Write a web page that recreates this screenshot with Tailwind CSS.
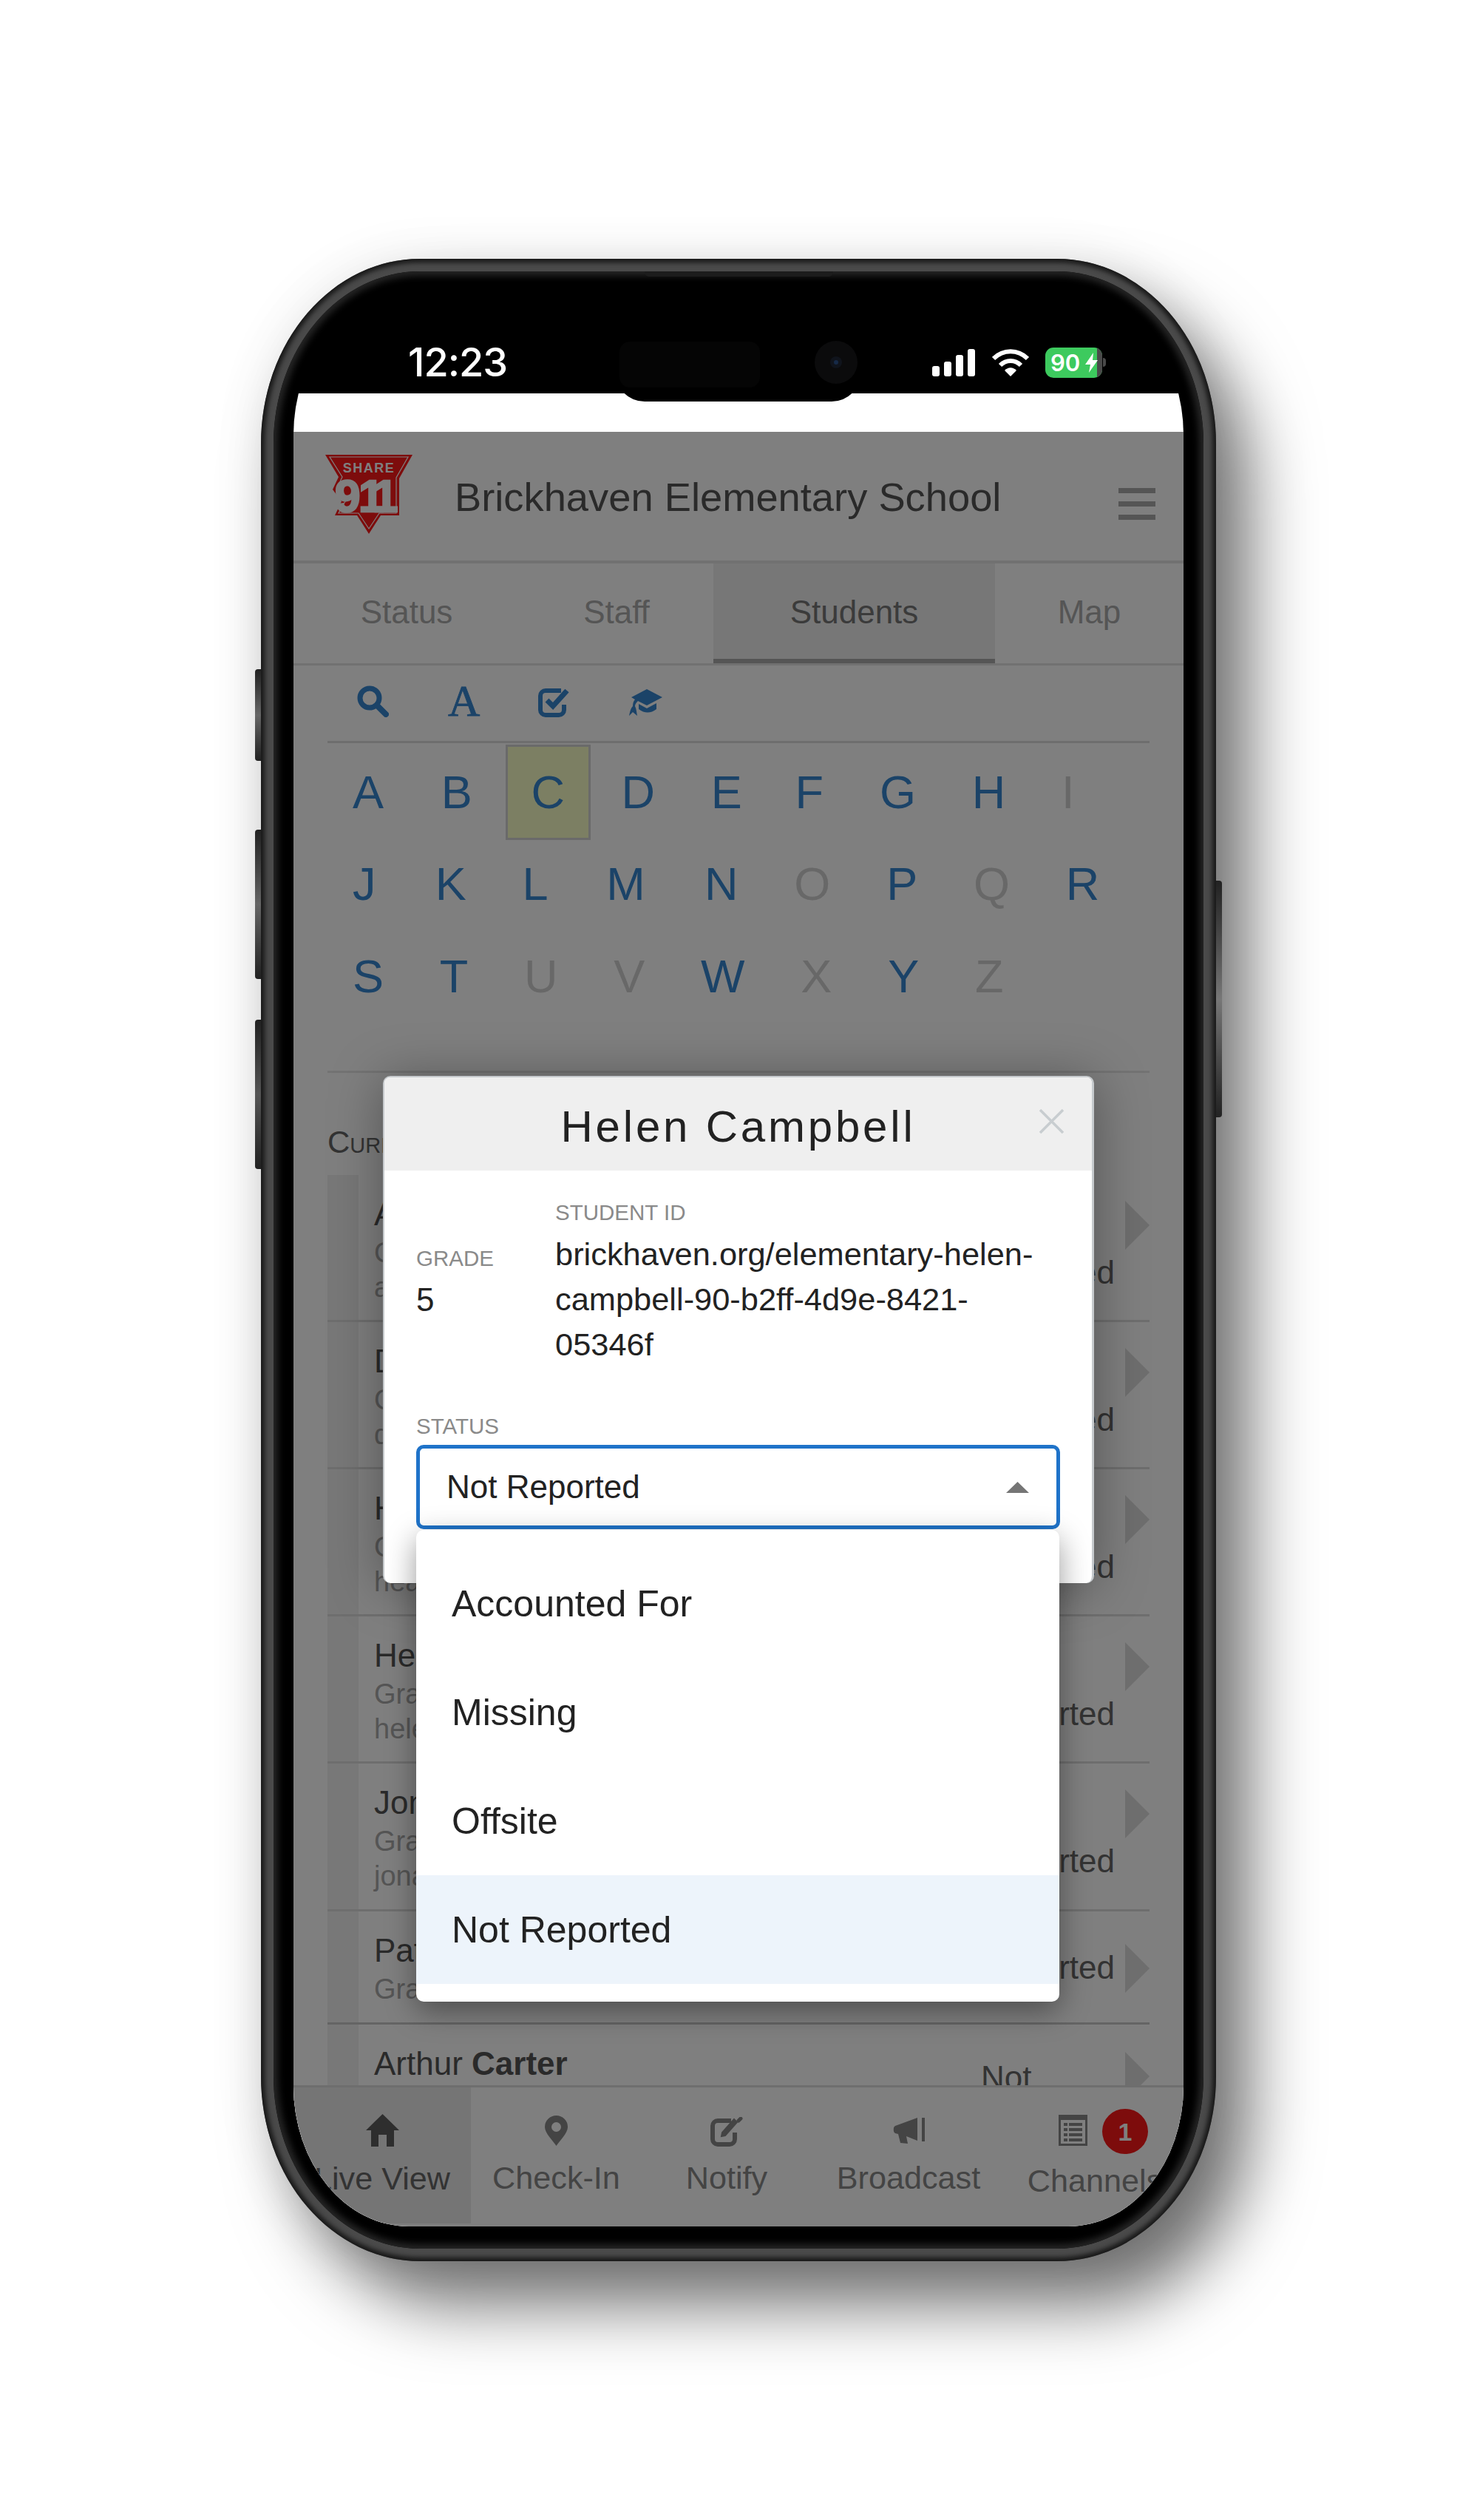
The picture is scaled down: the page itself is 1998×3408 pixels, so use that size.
<!DOCTYPE html>
<html lang="en">
<head>
    <meta charset="UTF-8">
    <meta name="viewport" content="width=device-width, initial-scale=1.0">
    <title>Brickhaven Elementary School</title>
    <script src="https://cdn.jsdelivr.net/npm/@tailwindcss/browser@4"></script>
</head>
<body class="bg-white">
<div class="w-[1998px] h-[3408px] overflow-hidden pt-[350px] pl-[353px] [font-family:'Liberation_Sans',Arial,sans-serif]">

    <!-- Phone frame -->
    <div class="relative w-[1292px] h-[2708px] p-[17px] rounded-[215px/250px] bg-[#4a4a4a] shadow-[inset_0_0_6px_5px_#181818,45px_60px_90px_rgba(0,0,0,0.55),0_0_70px_rgba(0,0,0,0.08)]">

        <!-- Side buttons -->
        <div class="absolute left-[-8px] top-[555px] w-[8px] h-[124px] rounded-l-[4px] bg-gradient-to-b from-[#222] via-[#666] to-[#222]"></div>
        <div class="absolute left-[-8px] top-[772px] w-[8px] h-[202px] rounded-l-[4px] bg-gradient-to-b from-[#222] via-[#666] to-[#222]"></div>
        <div class="absolute left-[-8px] top-[1029px] w-[8px] h-[202px] rounded-l-[4px] bg-gradient-to-b from-[#222] via-[#555] to-[#222]"></div>
        <div class="absolute right-[-8px] top-[841px] w-[8px] h-[320px] rounded-r-[4px] bg-gradient-to-b from-[#222] via-[#777] to-[#222]"></div>

        <!-- Bezel -->
        <div class="relative h-[2674px] px-[27px] pt-[31px] rounded-[198px/233px] bg-black shadow-[inset_0_0_10px_6px_#262626]">
            <div class="absolute left-[502px] top-0 w-[255px] h-[7px] rounded-b-[6px] bg-[#1c1c1c]"></div>

            <!-- Screen -->
            <div class="relative h-[2613px] overflow-hidden rounded-[156px/190px] bg-black">

                <!-- Status bar -->
                <div class="flex items-center h-[134px] pt-[50px] pl-[155px] pr-[105px] text-white">
                    <span class="text-[54px] font-medium leading-none [font-family:Inter,sans-serif] tracking-[-1px]">12:23</span>
                    <svg class="ml-auto" width="58" height="37" viewBox="0 0 58 37" fill="#fff">
                        <rect x="0" y="23" width="10" height="14" rx="3"/>
                        <rect x="16" y="17" width="10" height="20" rx="3"/>
                        <rect x="32" y="8" width="10" height="29" rx="3"/>
                        <rect x="48" y="0" width="10" height="37" rx="3"/>
                    </svg>
                    <svg class="ml-[23px]" width="50" height="37" viewBox="0 0 50 37" fill="none" stroke="#fff" stroke-width="6">
                        <path d="M2 13 C15 0 35 0 48 13"/>
                        <path d="M11 22 C19 14 31 14 39 22"/>
                        <path d="M17 29 L25 37 L33 29 C28 24 22 24 17 29 Z" fill="#fff" stroke="none"/>
                    </svg>
                    <div class="ml-[22px] flex items-center">
                        <div class="relative flex items-center w-[77px] h-[41px] pl-[7px] rounded-[11px] overflow-hidden bg-[#3dca5e] text-[31px] font-bold leading-none">
                            <div class="absolute right-0 inset-y-0 w-[7px] bg-[#4a4a4a]"></div>
                            <span class="relative [font-family:Inter,sans-serif] font-semibold">90</span>
                            <svg class="absolute left-[54px] top-[7px]" width="17" height="27" viewBox="0 0 17 27" fill="#fff"><path d="M11 0 L0 16 L7 16 L5 27 L17 10 L10 10 Z"/></svg>
                        </div>
                        <div class="ml-[1px] w-[4px] h-[12px] rounded-r-[4px] bg-[#4a4a4a]"></div>
                    </div>
                </div>

                <!-- Dynamic island -->
                <div class="absolute left-[435px] top-[48px] w-[333px] h-[97px] rounded-[40px] bg-black">
                    <div class="absolute left-[6px] top-[16px] w-[190px] h-[62px] rounded-[14px] bg-[#050505]"></div>
                    <div class="absolute left-[270px] top-[15px] w-[58px] h-[58px] rounded-full bg-[#0b0b0c]">
                        <div class="absolute left-[21px] top-[21px] w-[16px] h-[16px] rounded-full bg-[#10141c]">
                            <div class="absolute left-[5px] top-[5px] w-[6px] h-[6px] rounded-full bg-[#162a48]"></div>
                        </div>
                    </div>
                </div>

                <div class="h-[52px] bg-white"></div>

                <!-- App -->
                <div class="relative flex flex-col h-[2427px] overflow-hidden bg-white text-[44px] leading-[44px] text-[#666]">

                    <header class="flex items-start h-[178px] border-b-[4px] border-[#e2e2e2] pl-[43px]">
                        <svg class="mt-[31px] shrink-0" width="118" height="108" viewBox="0 0 118 108">
                            <path d="M0 0 H118 L100 32 V82 H75 L59 107 L43 82 H13 L22 63 L10 47 L18 30 Z" fill="#fa1818"/>
                            <path d="M6 3 H112 L96 31 V79 H73 L59 100 L45 79 H18 L27 63 L15 47 L23 30 Z" fill="none" stroke="#fff" stroke-width="1.2"/>
                            <text x="59" y="24" text-anchor="middle" font-size="18" font-weight="700" letter-spacing="1.5" fill="#fff">SHARE</text>
                            <text x="13 45 64" y="77" font-size="62" font-weight="700" stroke="#fff" stroke-width="2.5" fill="#fff">911</text>
                        </svg>
                        <h1 class="ml-[57px] mt-[62px] text-[54.3px] leading-[54px] whitespace-nowrap text-[#555]">Brickhaven Elementary School</h1>
                        <div class="ml-auto mr-[38px] mt-[76px] flex flex-col gap-[11px]">
                            <div class="w-[50px] h-[7px] bg-[#aaa]"></div>
                            <div class="w-[50px] h-[7px] bg-[#aaa]"></div>
                            <div class="w-[50px] h-[7px] bg-[#aaa]"></div>
                        </div>
                    </header>

                    <nav class="flex h-[138px] shrink-0 border-b-[3px] border-[#e2e2e2] text-[#aaa] text-center">
                        <div class="w-[306px] pt-[44px]">Status</div>
                        <div class="w-[262px] pt-[44px]">Staff</div>
                        <div class="w-[381px] pt-[44px] bg-[#eeeeee] border-b-[6px] border-[#aaa] text-[#777]">Students</div>
                        <div class="w-[255px] pt-[44px]">Map</div>
                    </nav>

                    <main class="flex-1 overflow-hidden px-[46px] min-h-0">
                        <div class="flex items-start h-[105px] border-b-[3px] border-[#dcdcdc] pt-[27px] pl-[40px] text-[#3686d0]">
                            <svg width="43" height="43" viewBox="0 0 43 43" fill="none" stroke="#3686d0">
                                <circle cx="17" cy="17" r="13" stroke-width="7"/>
                                <path d="M27 27 L39 39" stroke-width="8" stroke-linecap="round"/>
                            </svg>
                            <span class="ml-[80px] -mt-[9px] text-[60px] leading-[60px] [font-family:'Liberation_Serif',serif] [-webkit-text-stroke:0.8px_#3686d0]">A</span>
                            <svg class="ml-[79px] mt-[3px]" width="44" height="40" viewBox="0 0 44 40" fill="none" stroke="#3686d0" stroke-width="6">
                                <path d="M31 4 H10 a7 7 0 0 0 -7 7 V30 a7 7 0 0 0 7 7 H28 a7 7 0 0 0 7 -7 V23"/>
                                <path d="M12 17 L20 25 L39 4" stroke-width="7"/>
                            </svg>
                            <svg class="ml-[78px] mt-[5px]" width="46" height="36" viewBox="0 0 46 36" fill="#3686d0">
                                <path d="M25 0 L46 11 L25 22 L13 16 C11 18 9 20 9 23 C11 27 11 31 12 36 L6 31 L1 36 C2 31 3 26 6 23 C6 19 7 16 9 14 L4 11 Z"/>
                                <path d="M14 20 L25 26 L38 19 V27 C30 33 22 33 14 27 Z"/>
                            </svg>
                        </div>

                        <!-- Alphabet -->
                        <div class="flex flex-wrap -ml-[4px] mt-[4px] text-[63px] leading-none text-[#3686d0]">
                            <a class="flex items-center h-[124.5px] ml-[4.5px] mr-[6.5px] px-[33.4px]">A</a>
                            <a class="flex items-center h-[124.5px] mx-[4.5px] px-[33.4px]">B</a>
                            <a class="flex items-center h-[129px] -my-[2.25px] ml-[7px] mr-[4px] px-[31.75px] border-[3px] border-[#d4d4d4] bg-[#f8ffc6]">C</a>
                            <a class="flex items-center h-[124.5px] mx-[4.5px] px-[33.4px]">D</a>
                            <a class="flex items-center h-[124.5px] ml-[4.5px] mr-[0.5px] px-[33.4px]">E</a>
                            <a class="flex items-center h-[124.5px] mx-[4.5px] px-[33.4px]">F</a>
                            <a class="flex items-center h-[124.5px] mx-[4.5px] px-[33.4px]">G</a>
                            <a class="flex items-center h-[124.5px] mx-[4.5px] px-[33.4px]">H</a>
                            <a class="flex items-center h-[124.5px] mx-[4.5px] px-[33.4px] text-[#d0d0d0]">I</a>
                            <a class="flex items-center h-[124.5px] ml-[4.5px] mr-[9px] px-[33.4px]">J</a>
                            <a class="flex items-center h-[124.5px] mx-[4.5px] px-[33.4px]">K</a>
                            <a class="flex items-center h-[124.5px] ml-[4.5px] mr-[7.5px] px-[33.4px]">L</a>
                            <a class="flex items-center h-[124.5px] ml-[4.5px] mr-[9px] px-[33.4px]">M</a>
                            <a class="flex items-center h-[124.5px] mx-[4.5px] px-[33.4px]">N</a>
                            <a class="flex items-center h-[124.5px] mx-[4.5px] px-[33.4px] text-[#d0d0d0]">O</a>
                            <a class="flex items-center h-[124.5px] mx-[4.5px] px-[33.4px]">P</a>
                            <a class="flex items-center h-[124.5px] mx-[4.5px] px-[33.4px] text-[#d0d0d0]">Q</a>
                            <a class="flex items-center h-[124.5px] mx-[4.5px] px-[33.4px]">R</a>
                            <a class="flex items-center h-[124.5px] mx-[4.5px] px-[33.4px]">S</a>
                            <a class="flex items-center h-[124.5px] mx-[4.5px] px-[33.4px]">T</a>
                            <a class="flex items-center h-[124.5px] mx-[4.5px] px-[33.4px] text-[#d0d0d0]">U</a>
                            <a class="flex items-center h-[124.5px] mx-[4.5px] px-[33.4px] text-[#d0d0d0]">V</a>
                            <a class="flex items-center h-[124.5px] mx-[4.5px] px-[33.4px]">W</a>
                            <a class="flex items-center h-[124.5px] mx-[4.5px] px-[33.4px] text-[#d0d0d0]">X</a>
                            <a class="flex items-center h-[124.5px] mx-[4.5px] px-[33.4px]">Y</a>
                            <a class="flex items-center h-[124.5px] mx-[4.5px] px-[33.4px] text-[#d0d0d0]">Z</a>
                        </div>

                        <div class="mt-[65px] border-t-[3px] border-[#e6e6e6]"></div>
                        <h2 class="mt-[73px] text-[42px] leading-[42px] [font-variant:small-caps]">Current Students</h2>

                        <!-- Student rows -->
                        <div class="mt-[23px]">
                            <div class="flex h-[199px] border-b-[3px] border-[#dcdcdc]">
                                <div class="w-[42px] shrink-0 bg-[#f0f0f0]"></div>
                                <div class="flex-1 pl-[21px] pt-[31px] text-[#555]">Amy <b>Campbell</b>
                                    <div class="mt-[7px] text-[38px] leading-[47px] text-[#aaa]">Grade 5<br>amy.campbell</div>
                                </div>
                                <div class="w-[176px] pt-[49px] leading-[55px]">Not Reported</div>
                                <svg class="ml-[19px] mt-[35px]" width="33" height="66" viewBox="0 0 33 66" fill="#dcdcdc"><path d="M0 0 L33 33 L0 66 Z"/></svg>
                            </div>
                            <div class="flex h-[199px] border-b-[3px] border-[#dcdcdc]">
                                <div class="w-[42px] shrink-0 bg-[#f0f0f0]"></div>
                                <div class="flex-1 pl-[21px] pt-[31px] text-[#555]">Daniel <b>Campbell</b>
                                    <div class="mt-[7px] text-[38px] leading-[47px] text-[#aaa]">Grade 4<br>daniel.campbell</div>
                                </div>
                                <div class="w-[176px] pt-[49px] leading-[55px]">Not Reported</div>
                                <svg class="ml-[19px] mt-[35px]" width="33" height="66" viewBox="0 0 33 66" fill="#dcdcdc"><path d="M0 0 L33 33 L0 66 Z"/></svg>
                            </div>
                            <div class="flex h-[199px] border-b-[3px] border-[#dcdcdc]">
                                <div class="w-[42px] shrink-0 bg-[#f0f0f0]"></div>
                                <div class="flex-1 pl-[21px] pt-[31px] text-[#555]">Heath <b>Campbell</b>
                                    <div class="mt-[7px] text-[38px] leading-[47px] text-[#aaa]">Grade 3<br>heath.campbell</div>
                                </div>
                                <div class="w-[176px] pt-[49px] leading-[55px]">Not Reported</div>
                                <svg class="ml-[19px] mt-[35px]" width="33" height="66" viewBox="0 0 33 66" fill="#dcdcdc"><path d="M0 0 L33 33 L0 66 Z"/></svg>
                            </div>
                            <div class="flex h-[199px] border-b-[3px] border-[#dcdcdc]">
                                <div class="w-[42px] shrink-0 bg-[#f0f0f0]"></div>
                                <div class="flex-1 pl-[21px] pt-[31px] text-[#555]">Helen <b>Campbell</b>
                                    <div class="mt-[7px] text-[38px] leading-[47px] text-[#aaa]">Grade 5<br>helen.campbell</div>
                                </div>
                                <div class="w-[176px] pt-[49px] leading-[55px]">Not Reported</div>
                                <svg class="ml-[19px] mt-[35px]" width="33" height="66" viewBox="0 0 33 66" fill="#dcdcdc"><path d="M0 0 L33 33 L0 66 Z"/></svg>
                            </div>
                            <div class="flex h-[200px] border-b-[3px] border-[#dcdcdc]">
                                <div class="w-[42px] shrink-0 bg-[#f0f0f0]"></div>
                                <div class="flex-1 pl-[21px] pt-[31px] text-[#555]">Jonas <b>Campbell</b>
                                    <div class="mt-[7px] text-[38px] leading-[47px] text-[#aaa]">Grade 2<br>jonas.campbell</div>
                                </div>
                                <div class="w-[176px] pt-[49px] leading-[55px]">Not Reported</div>
                                <svg class="ml-[19px] mt-[35px]" width="33" height="66" viewBox="0 0 33 66" fill="#dcdcdc"><path d="M0 0 L33 33 L0 66 Z"/></svg>
                            </div>
                            <div class="flex h-[153px] border-b-[3px] border-[#c8c8c8]">
                                <div class="w-[42px] shrink-0 bg-[#f0f0f0]"></div>
                                <div class="flex-1 pl-[21px] pt-[31px] text-[#555]">Patricia <b>Campbell</b>
                                    <div class="mt-[7px] text-[38px] leading-[47px] text-[#aaa]">Grade 1</div>
                                </div>
                                <div class="w-[176px] -mt-[7px] leading-[55px]">Not Reported</div>
                                <svg class="ml-[19px] mt-[44px]" width="33" height="66" viewBox="0 0 33 66" fill="#dcdcdc"><path d="M0 0 L33 33 L0 66 Z"/></svg>
                            </div>
                            <div class="flex h-[199px]">
                                <div class="w-[42px] shrink-0 bg-[#f0f0f0]"></div>
                                <div class="flex-1 pl-[21px] pt-[31px] text-[#555]">Arthur <b>Carter</b>
                                    <div class="mt-[7px] text-[38px] leading-[47px] text-[#aaa]">Grade 5<br>arthur.carter</div>
                                </div>
                                <div class="w-[176px] pt-[44px] leading-[55px]">Not Reported</div>
                                <svg class="ml-[19px] mt-[37px]" width="33" height="66" viewBox="0 0 33 66" fill="#dcdcdc"><path d="M0 0 L33 33 L0 66 Z"/></svg>
                            </div>
                        </div>
                    </main>

                    <!-- Bottom nav -->
                    <footer class="relative flex h-[191px] shrink-0 border-t-[3px] border-[#dcdcdc] bg-white text-[43.2px] leading-[42px] text-[#888] text-center">
                        <div class="flex flex-col items-center shrink-0 w-[240px] h-[184px] pt-[36px] bg-[#eaeaea] text-[#666]">
                            <svg width="45" height="44" viewBox="0 0 45 44" fill="#5c5c5c"><path d="M22.5 0 L45 22 H38 V44 H28 V28 H17 V44 H7 V22 H0 Z"/></svg>
                            <span class="mt-[22px] whitespace-nowrap">Live View</span>
                        </div>
                        <div class="flex flex-col items-center shrink-0 w-[231px] pt-[36px]">
                            <svg class="mt-[2px]" width="31" height="41" viewBox="0 0 31 41" fill="#888" fill-rule="evenodd"><path d="M15.5 0 A15.5 15.5 0 0 1 31 15.5 C31 24 20 34 15.5 41 C11 34 0 24 0 15.5 A15.5 15.5 0 0 1 15.5 0 Z M15.5 9 A6.5 6.5 0 1 0 15.5 22 A6.5 6.5 0 1 0 15.5 9 Z"/></svg>
                            <span class="mt-[22px] whitespace-nowrap">Check-In</span>
                        </div>
                        <div class="flex flex-col items-center shrink-0 w-[230px] pt-[36px]">
                            <svg class="mt-[4px]" width="44" height="40" viewBox="0 0 44 40" fill="none" stroke="#888" stroke-width="6">
                                <path d="M28 5 H10 a7 7 0 0 0 -7 7 V30 a7 7 0 0 0 7 7 H26 a7 7 0 0 0 7 -7 V21"/>
                                <path d="M15 26 L20 25 L36 7 L32 3 L16 21 Z" fill="#888" stroke-width="2"/>
                                <path d="M38 5 L41 2" stroke-width="5" stroke-linecap="round"/>
                            </svg>
                            <span class="mt-[21px] whitespace-nowrap">Notify</span>
                        </div>
                        <div class="flex flex-col items-center shrink-0 w-[262px] pt-[36px]">
                            <svg class="-ml-[4px] mt-[5px]" width="47" height="35" viewBox="0 0 47 35" fill="#888">
                                <path d="M7 11 L37 0 V31 L22 25 L24 35 L14 34 L11 22 L7 21 C4 20 4 12 7 11 Z"/>
                                <rect x="43" y="0" width="4" height="32"/>
                            </svg>
                            <span class="mt-[25px] whitespace-nowrap">Broadcast</span>
                        </div>
                        <div class="relative flex flex-col items-center shrink-0 w-[242px] pt-[36px]">
                            <svg class="-ml-[60px] mt-[1px]" width="39" height="42" viewBox="0 0 39 42">
                                <rect width="39" height="42" fill="#888"/>
                                <rect x="3" y="7" width="33" height="32" fill="#fff"/>
                                <g fill="#888">
                                    <rect x="7" y="11" width="5" height="4"/><rect x="14" y="11" width="18" height="4"/>
                                    <rect x="7" y="18" width="5" height="4"/><rect x="14" y="18" width="18" height="4"/>
                                    <rect x="7" y="25" width="5" height="4"/><rect x="14" y="25" width="18" height="4"/>
                                    <rect x="7" y="32" width="5" height="4"/><rect x="14" y="32" width="18" height="4"/>
                                </g>
                            </svg>
                            <span class="mt-[26px] whitespace-nowrap">Channels</span>
                            <div class="absolute left-[131px] top-[29px] flex items-center justify-center w-[62px] h-[61px] rounded-full bg-[#fa1818] text-[34px] font-bold text-white">1</div>
                        </div>
                    </footer>

                    <!-- Backdrop -->
                    <div class="absolute inset-0 bg-black/50"></div>

                    <!-- Student modal -->
                    <div class="absolute left-[121px] top-[871px] w-[962px] h-[686px] rounded-[10px] border-r-[3px] border-t-[2px] border-l-[2px] border-[#c6cacd] bg-white shadow-[0_5px_70px_rgba(0,0,0,0.35)]">
                        <div class="relative h-[126px] rounded-t-[8px] bg-[#efefef] pt-[37px] text-center text-[60px] leading-[60px] tracking-[3.8px] text-[#222]">
                            Helen Campbell
                            <svg class="absolute right-[38px] top-[43px]" width="33" height="33" viewBox="0 0 33 33" stroke="#c8cdd0" stroke-width="3.5"><path d="M1 1 L32 32 M32 1 L1 32"/></svg>
                        </div>
                        <div class="px-[43px]">
                            <div class="flex items-center pt-[41px] text-[#222]">
                                <div class="w-[188px] shrink-0">
                                    <div class="text-[29.5px] leading-[32px] text-[#8a8a8a]">GRADE</div>
                                    <div class="mt-[9px] leading-[61px]">5</div>
                                </div>
                                <div class="flex-1">
                                    <div class="text-[29.5px] leading-[32px] text-[#8a8a8a]">STUDENT ID</div>
                                    <div class="mt-[10px] text-[43.4px] leading-[61px] break-all w-[680px]">brickhaven.org/elementary-helen-<br>campbell-90-b2ff-4d9e-8421-<br>05346f</div>
                                </div>
                            </div>
                            <div class="mt-[64px] text-[29.5px] leading-[32px] text-[#8a8a8a]">STATUS</div>
                            <div class="relative flex items-center mt-[9px] w-[871px] h-[114px] pl-[36px] pr-[37px] rounded-[10px] border-[5px] border-[#1f73c9] text-[#222]">
                                <span>Not Reported</span>
                                <svg class="ml-auto" width="31" height="15" viewBox="0 0 31 15" fill="#757575"><path d="M15.5 0 L31 15 H0 Z"/></svg>

                                <!-- Select menu -->
                                <div class="absolute left-[-5px] top-[110px] z-10 w-[870px] h-[638px] pt-[26px] rounded-[10px] bg-white text-[50px] text-[#222] shadow-[0_12px_40px_rgba(0,0,0,0.4)]">
                                    <div class="flex items-center h-[147px] px-[48px]">Accounted For</div>
                                    <div class="flex items-center h-[147px] px-[48px]">Missing</div>
                                    <div class="flex items-center h-[147px] px-[48px]">Offsite</div>
                                    <div class="flex items-center h-[147px] px-[48px] bg-[#edf4fb]">Not Reported</div>
                                </div>
                            </div>
                        </div>
                    </div>
                </div>
            </div>
        </div>
    </div>
</div>
</body>
</html>
